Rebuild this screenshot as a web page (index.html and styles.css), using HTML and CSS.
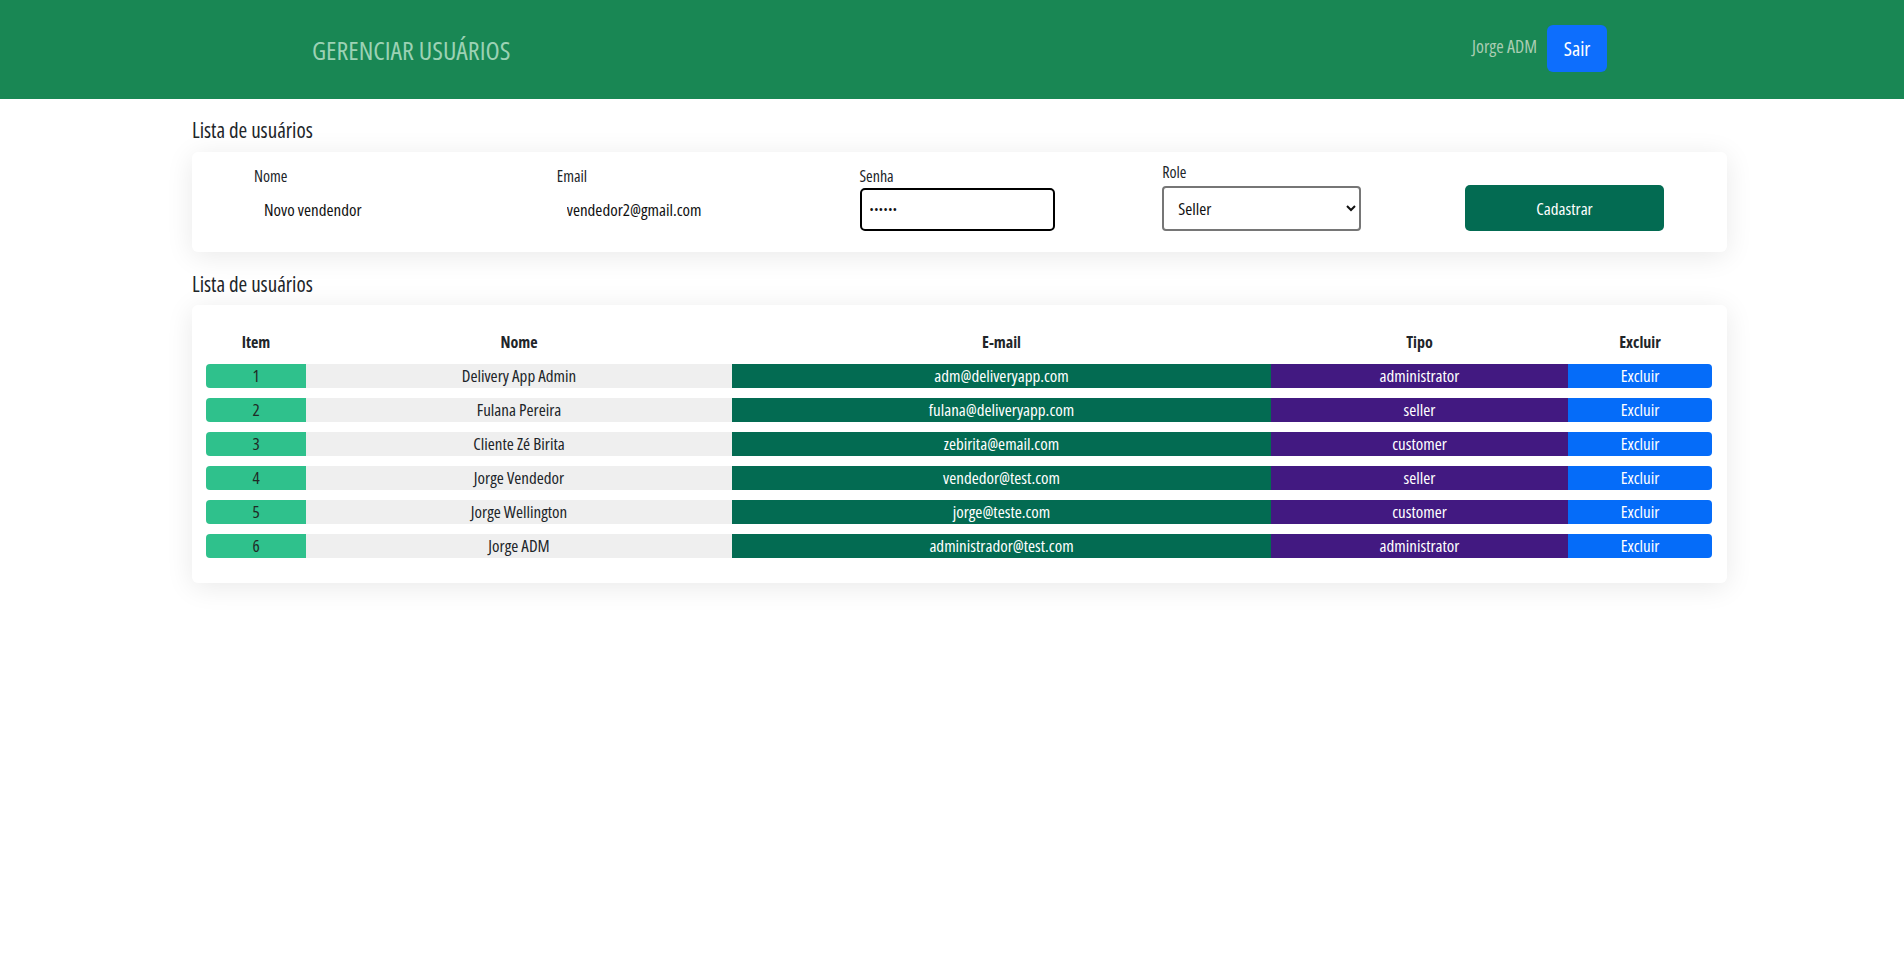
FILE: index.html
```html
<!DOCTYPE html>
<html lang="pt-BR">
<head>
<meta charset="utf-8">
<title>Gerenciar usuários</title>
<link rel="stylesheet" href="styles.css">
</head>
<body>
<header class="topbar">
  <div class="topbar-inner">
    <span class="brand">GERENCIAR USUÁRIOS</span>
    <div class="user-area">
      <span class="user-name">Jorge ADM</span>
      <button class="btn-logout" type="button">Sair</button>
    </div>
  </div>
</header>
<main class="page">
  <h2 class="section-title">Lista de usuários</h2>
  <form class="card form-card">
    <div class="field">
      <label class="field-label tight">Nome</label>
      <input class="text-input plain" type="text" value="Novo vendendor">
    </div>
    <div class="field">
      <label class="field-label tight">Email</label>
      <input class="text-input plain" type="text" value="vendedor2@gmail.com">
    </div>
    <div class="field">
      <label class="field-label tight">Senha</label>
      <input class="text-input focused" type="password" value="123456">
    </div>
    <div class="field">
      <label class="field-label">Role</label>
      <select class="select-input">
        <option>Seller</option>
        <option>Customer</option>
        <option>Administrator</option>
      </select>
    </div>
    <div class="field">
      <button class="btn-submit" type="button">Cadastrar</button>
    </div>
  </form>

  <h2 class="section-title second">Lista de usuários</h2>
  <div class="card table-card">
    <table class="users">
      <colgroup>
        <col class="c-item"><col class="c-name"><col class="c-email"><col class="c-type"><col class="c-del">
      </colgroup>
      <thead>
        <tr><th>Item</th><th>Nome</th><th>E-mail</th><th>Tipo</th><th>Excluir</th></tr>
      </thead>
      <tbody>
        <tr><td class="t-item">1</td><td class="t-name">Delivery App Admin</td><td class="t-email">adm@deliveryapp.com</td><td class="t-type">administrator</td><td class="t-del">Excluir</td></tr>
        <tr><td class="t-item">2</td><td class="t-name">Fulana Pereira</td><td class="t-email">fulana@deliveryapp.com</td><td class="t-type">seller</td><td class="t-del">Excluir</td></tr>
        <tr><td class="t-item">3</td><td class="t-name">Cliente Zé Birita</td><td class="t-email">zebirita@email.com</td><td class="t-type">customer</td><td class="t-del">Excluir</td></tr>
        <tr><td class="t-item">4</td><td class="t-name">Jorge Vendedor</td><td class="t-email">vendedor@test.com</td><td class="t-type">seller</td><td class="t-del">Excluir</td></tr>
        <tr><td class="t-item">5</td><td class="t-name">Jorge Wellington</td><td class="t-email">jorge@teste.com</td><td class="t-type">customer</td><td class="t-del">Excluir</td></tr>
        <tr><td class="t-item">6</td><td class="t-name">Jorge ADM</td><td class="t-email">administrador@test.com</td><td class="t-type">administrator</td><td class="t-del">Excluir</td></tr>
      </tbody>
    </table>
  </div>
</main>
</body>
</html>
```

FILE: styles.css
```css
* { box-sizing: border-box; }

body {
  margin: 0;
  background: #ffffff;
  color: #212529;
  font-family: "Open Sans", "DejaVu Sans Condensed", sans-serif;
  font-stretch: 75%;
  font-size: 16px;
}

button, input, select {
  font-stretch: 75%;
}

.topbar {
  background: #198754;
  height: 99px;
}

.topbar-inner {
  width: 1320px;
  margin: 0 auto;
  height: 100%;
  padding: 0 5px 0 20px;
  display: flex;
  align-items: center;
  justify-content: space-between;
}

.brand {
  color: #9cd2b4;
  font-size: 26px;
  line-height: 1;
  margin-top: 0;
}

.user-area {
  display: flex;
  align-items: center;
  gap: 10px;
  margin-top: -2px;
}

.user-name {
  color: #a9cdb3;
  font-size: 18px;
  margin-top: -6px;
}

.btn-logout {
  width: 60px;
  height: 47px;
  border: none;
  border-radius: 6px;
  background: #0d6efd;
  color: #ffffff;
  font-family: inherit;
  font-size: 20px;
  padding: 0;
}

.page {
  padding: 19px 177px 40px 192px;
}

.section-title {
  margin: 0 0 10px;
  font-size: 21px;
  font-weight: 400;
  line-height: 24px;
  color: #212529;
}

.section-title.second {
  margin-top: 20px;
  margin-bottom: 9px;
}

.card {
  background: #ffffff;
  border-radius: 6px;
  box-shadow: 0 4px 28px rgba(0, 0, 0, 0.09);
}

.form-card {
  display: flex;
  align-items: flex-end;
  justify-content: space-between;
  padding: 11px 62px 21px;
}

.field {
  width: 200px;
  display: flex;
  flex-direction: column;
}

.field-label {
  font-size: 16px;
  line-height: 19px;
  margin-bottom: 4px;
  color: #212529;
}

.field-label.tight {
  margin-bottom: 2px;
}

.text-input {
  width: 195px;
  height: 43px;
  border: 2px solid transparent;
  border-radius: 5px;
  padding: 0 8px;
  font-family: inherit;
  font-size: 17px;
  color: #111;
  background: #fff;
  outline: none;
}

.text-input.focused {
  border-color: #000000;
  font-size: 11px;
  letter-spacing: 0.5px;
}

.select-input {
  width: 199px;
  height: 45px;
  border: 2px solid #767676;
  border-radius: 4px;
  padding: 0 10px;
  font-family: inherit;
  font-size: 17px;
  color: #111;
  background: #fff;
}

.btn-submit {
  width: 199px;
  height: 46px;
  border: none;
  border-radius: 5px;
  background: #036b52;
  color: #ffffff;
  font-family: inherit;
  font-size: 17px;
}

.table-card {
  padding: 15px 15px 25px 14px;
}

.users {
  width: 100%;
  table-layout: fixed;
  border-collapse: separate;
  border-spacing: 0 10px;
  margin: 0 0 -10px;
}

.c-item { width: 100px; }
.c-name { width: 426px; }
.c-email { width: 539px; }
.c-type { width: 297px; }
.c-del { width: 144px; }

.users th {
  font-weight: 700;
  font-size: 16px;
  height: 24px;
  line-height: 24px;
  padding: 0;
  text-align: center;
  color: #212529;
}

.users td {
  height: 24px;
  line-height: 24px;
  padding: 0;
  text-align: center;
  font-size: 17px;
}

.t-item {
  background: #2fc18c;
  color: #1f2a26;
  border-radius: 4px 0 0 4px;
}

.t-name {
  background: #efefef;
  color: #212529;
}

.t-email {
  background: #036b52;
  color: #ffffff;
}

.t-type {
  background: #421981;
  color: #ffffff;
}

.t-del {
  background: #056cf9;
  color: #ffffff;
  border-radius: 0 4px 4px 0;
}
```
